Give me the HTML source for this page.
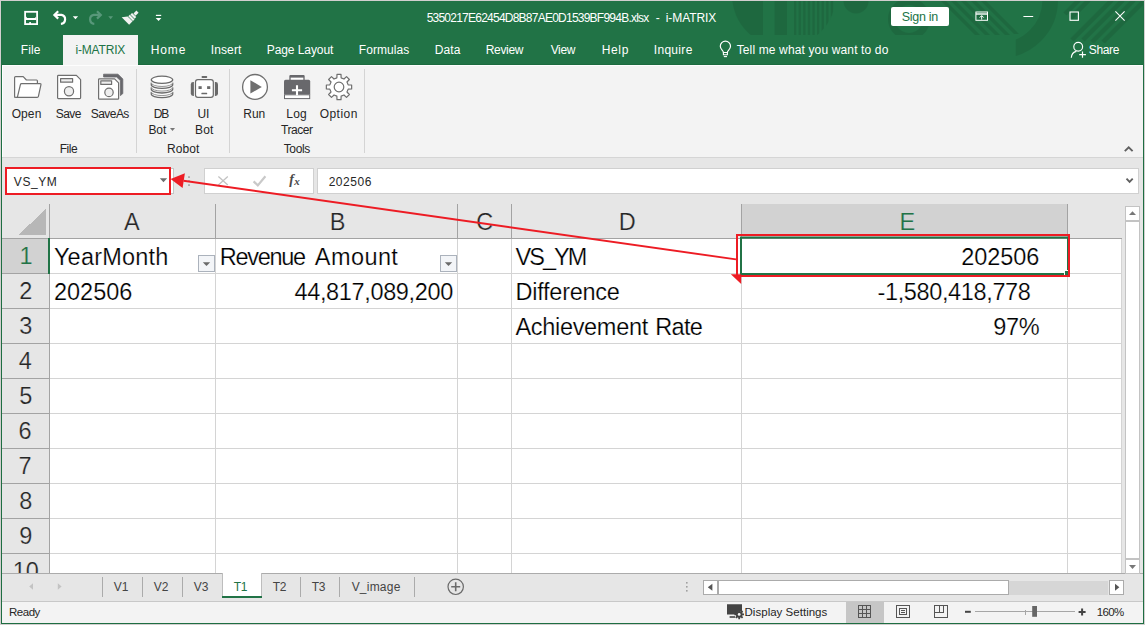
<!DOCTYPE html>
<html><head><meta charset="utf-8"><title>i-MATRIX</title>
<style>
html,body{margin:0;padding:0;background:#d2cfcf;}
body{width:1145px;height:625px;overflow:hidden;font-family:"Liberation Sans",sans-serif;}
#win{position:absolute;left:0;top:0;width:1145px;height:625px;overflow:hidden;background:#d2cfcf;}
.a{position:absolute;}
.t{position:absolute;white-space:pre;line-height:1;font-family:"Liberation Sans",sans-serif;}
svg{position:absolute;overflow:visible;}

</style></head>
<body>
<div id="win">
<!-- window frame -->
<div class="a" style="left:1px;top:1px;width:1143px;height:623px;background:#1e6e42;"></div>
<div class="a" style="left:2px;top:1px;width:1141px;height:63px;background:#217346;"></div>
<div class="a" style="left:2px;top:64px;width:1141px;height:1px;background:#1c6b3f;"></div>
<!-- ribbon body -->
<div class="a" style="left:2px;top:65px;width:1141px;height:92px;background:#f3f3f3;box-shadow:inset 1px 1px 0 #fdfdfd;"></div>
<!-- formula bar + grid surround -->
<div class="a" style="left:2px;top:157px;width:1141px;height:445px;background:#e6e6e6;"></div>
<div class="a" style="left:2px;top:157px;width:1141px;height:1px;background:#d5d5d5;"></div>
<!-- active ribbon tab -->
<div class="a" style="left:63px;top:35px;width:75px;height:30px;background:#f3f3f3;"></div>
<!-- sign in -->
<!-- ribbon group separators -->
<div class="a" style="left:136px;top:69px;width:1px;height:84px;background:#d4d4d4;"></div>
<div class="a" style="left:229px;top:69px;width:1px;height:84px;background:#d4d4d4;"></div>
<div class="a" style="left:364px;top:69px;width:1px;height:84px;background:#d4d4d4;"></div>
<!-- name box -->
<!-- original name box edge peeking right of red box -->
<div class="a" style="left:168px;top:168px;width:5px;height:24px;background:#fff;border:1px solid #c6c6c6;border-left:none;"></div>
<div class="a" style="left:5px;top:167px;width:162px;height:24px;background:#fff;border:2px solid #ed1c24;"></div>
<!-- fx box -->
<div class="a" style="left:204px;top:168px;width:108px;height:24px;background:#fff;border:1px solid #d0d0d0;"></div>
<!-- formula input -->
<div class="a" style="left:317px;top:168px;width:820px;height:24px;background:#fff;border:1px solid #d0d0d0;"></div>
<!-- grid white -->
<div class="a" style="left:50px;top:238px;width:1072px;height:335px;background:#fff;"></div>
<!-- E header highlight -->
<div class="a" style="left:742px;top:204px;width:326px;height:34px;background:#d2d2d2;"></div>
<!-- row 1 header highlight -->
<div class="a" style="left:2px;top:239px;width:47px;height:34px;background:#d2d2d2;"></div>
<!-- grid lines svg -->
<svg width="1145" height="625" style="left:0;top:0" shape-rendering="crispEdges">
  <g stroke="#d4d4d4" stroke-width="1">
    <!-- horizontal cell lines -->
    <path d="M49 273.5H1122M49 308.5H1122M49 343.5H1122M49 378.5H1122M49 413.5H1122M49 448.5H1122M49 483.5H1122M49 518.5H1122M49 553.5H1122"/>
    <!-- vertical cell lines -->
    <path d="M215.5 238V573M457.5 238V573M511.5 238V573M741.5 238V573M1067.5 238V573M1121.5 238V573"/>
  </g>
  <g stroke="#a3a3a3" stroke-width="1">
    <!-- header separators -->
    <path d="M49.5 204V573M2 238.5H1122"/>
    <path d="M215.5 204V238M457.5 204V238M511.5 204V238M741.5 204V238M1067.5 204V238"/>
    <path d="M2 273.5H49M2 308.5H49M2 343.5H49M2 378.5H49M2 413.5H49M2 448.5H49M2 483.5H49M2 518.5H49M2 553.5H49"/>
  </g>
  <path d="M19 234.6H46V208.6Z" fill="#b7b7b7" stroke="none"/>
  <path d="M49 238V273.5" stroke="#217346" stroke-width="2"/>
</svg>

<!-- ===== title bar icons ===== -->
<svg width="1145" height="66" style="left:0;top:0">
  <!-- decorative pattern -->
  <defs>
    <clipPath id="cpA"><rect x="700" y="1" width="443" height="34"/></clipPath>
    <clipPath id="cpB"><rect x="700" y="1" width="443" height="42"/></clipPath>
    <clipPath id="cpC"><rect x="1015.7" y="1" width="100" height="64"/></clipPath>
    <clipPath id="cpDisc"><circle cx="784" cy="-5" r="52"/></clipPath>
  </defs>
  <g clip-path="url(#cpA)" fill="#000" opacity="0.085">
    <g clip-path="url(#cpDisc)">
      <rect x="730" y="0" width="33" height="36"/>
      <rect x="774.6" y="0" width="12.4" height="36"/>
      <rect x="794" y="0" width="2.3" height="36"/><rect x="798.6" y="0" width="2.3" height="36"/><rect x="803.2" y="0" width="2.3" height="36"/>
      <rect x="807.8" y="0" width="2.3" height="36"/><rect x="812.4" y="0" width="2.3" height="36"/><rect x="817" y="0" width="2.3" height="36"/>
      <rect x="821.6" y="0" width="2.3" height="36"/><rect x="826.2" y="0" width="2.3" height="36"/><rect x="830.8" y="0" width="2.3" height="36"/>
    </g>
    <circle cx="856" cy="1" r="12.5"/>
    <path d="M909 -2a21 21 0 1 0 0.01 0ZM909 5a14 14 0 1 1 -0.01 0Z" fill-rule="evenodd"/>
    <!-- diagonal stripes \ -->
    <path d="M940 0h5l36 36h-5zM950 0h5l36 36h-5zM960 0h5l36 36h-5zM970 0h5l36 36h-5zM980 0h5l34 34h-5z"/>
  </g>
  <g clip-path="url(#cpC)" fill="none" stroke="#000" opacity="0.085">
    <path d="M1050.2 0A50.2 50.2 0 0 1 1000 50.2" stroke-width="15.6"/>
  </g>
  <g clip-path="url(#cpB)" fill="none" stroke="#000" opacity="0.085">
    <path d="M1079 0L1065 14M1089 0L1071 18" stroke-width="4.5"/>
    <path d="M1112 0L1072 40M1123 0L1083 40M1134 0L1092 42M1145 0L1103 42" stroke-width="4.5"/>
  </g>
  <rect x="891" y="7" width="58" height="19" rx="2" fill="#fff"/>
  <!-- save -->
  <rect x="25.1" y="11.8" width="12" height="12.3" fill="none" stroke="#fff" stroke-width="1.8"/>
  <path d="M26 18H36.2V20H26Z" fill="#fff"/>
  <path d="M26 16.6L27.2 18H26ZM36.2 16.6L35 18H36.2Z" fill="#fff"/>
  <rect x="29.2" y="22.1" width="1.8" height="2.2" fill="#fff"/>
  <!-- undo -->
  <g fill="none" stroke="#fff" stroke-width="2.2" stroke-linejoin="miter">
    <path d="M58.2 11.2L54.4 14.9L58.2 18.6"/>
    <path d="M55 14.9H61.5A4.5 4.5 0 0 1 60.9 23.8"/>
  </g>
  <path d="M72.8 16.2H78.1L75.45 19.2Z" fill="#fff"/>
  <!-- redo (disabled) -->
  <g fill="none" stroke="#58987a" stroke-width="2.2">
    <path d="M97 11.2L100.8 14.9L97 18.6"/>
    <path d="M100.2 14.9H93.7A4.5 4.5 0 0 0 94.3 23.8"/>
  </g>
  <path d="M108.3 16.2H113L110.65 19.2Z" fill="#58987a"/>
  <!-- brush -->
  <g fill="#f2f2f2" transform="matrix(-0.7071,0.7071,0.7071,0.7071,137.5,11.6)">
    <rect x="0" y="-1.5" width="4.2" height="3"/>
    <rect x="4.8" y="-2.9" width="2.3" height="5.9"/>
    <rect x="7.6" y="-3.2" width="2.3" height="6.6"/>
    <path d="M10.4 -3.6V3.4H15.2V-7.2Z"/>
  </g>
  <!-- customize QAT -->
  <path d="M155.9 15.4H161.2" stroke="#fff" stroke-width="1.2"/>
  <path d="M155.7 18H161.4L158.55 21.1Z" fill="#fff"/>
  <!-- ribbon display options -->
  <g fill="none" stroke="#fff" stroke-width="1">
    <rect x="975.9" y="12" width="11.6" height="8.3"/>
    <path d="M975.9 14H987.5" stroke-width="1.4"/>
    <path d="M981.7 19.6V15.8M979.7 17.6L981.7 15.6L983.7 17.6"/>
  </g>
  <!-- minimize, maximize, close -->
  <path d="M1023.4 16.5H1033.2" stroke="#fff" stroke-width="1"/>
  <rect x="1070" y="12" width="8.4" height="8.3" fill="none" stroke="#fff" stroke-width="1.1"/>
  <path d="M1115.4 11.4L1124.6 20.6M1124.6 11.4L1115.4 20.6" stroke="#fff" stroke-width="1.1" fill="none"/>
  <!-- lightbulb -->
  <g fill="none" stroke="#fff" stroke-width="1.2">
    <path d="M723.4 52.5C723.4 50.4 720.3 49.6 720.3 46.3A5.1 5.1 0 0 1 730.5 46.3C730.5 49.6 727.4 50.4 727.4 52.5Z"/>
    <path d="M723.4 52.5V54.7H727.4V52.5" stroke-width="1.1"/>
    <path d="M723.8 56.6H727" stroke-width="1.1"/>
  </g>
  <!-- share person -->
  <g fill="none" stroke="#fff" stroke-width="1.15">
    <circle cx="1078.2" cy="46.8" r="4.4"/>
    <path d="M1071.3 57.8C1071.5 54.4 1073.6 52 1076.4 51.4"/>
    <path d="M1082.5 51.6V57.8M1079.2 54.6H1085.9" stroke-width="1.2"/>
  </g>
</svg>

<!-- ===== ribbon icons ===== -->
<svg width="1145" height="160" style="left:0;top:0">
  <g fill="#fff" stroke="#6f6f6f" stroke-width="1.2" stroke-linejoin="round">
    <!-- Open folder -->
    <path d="M14.6 97.4V77.6Q14.6 76.6 15.6 76.6H23.2L26.4 80H36.6Q37.4 80 37.4 81V83.6"/>
    <path d="M14.6 96.6Q14.8 97.4 16 97.4H37.2Q38.2 97.4 38.4 96.4L40.9 84.8Q41.2 83.6 40 83.6H21.6Q20.6 83.6 20.4 84.6L17.4 97.2" />
    <!-- Save -->
    <path d="M57.6 76.2Q57.6 75.4 58.4 75.4H76.4L80.6 79.6V97.8Q80.6 98.6 79.8 98.6H58.4Q57.6 98.6 57.6 97.8Z"/>
    <rect x="60.6" y="78.6" width="12" height="3.6" fill="#efefef"/>
    <circle cx="69" cy="91.2" r="4.6" fill="#efefef"/>
  </g>
  <!-- SaveAs -->
  <path d="M103.6 74.2H118L122.8 79V93.6L120.4 95.6V80.6L116.6 77H103.6Z" fill="#68686c" stroke="#68686c" stroke-width="0.8" stroke-linejoin="round"/>
  <g fill="#fff" stroke="#6f6f6f" stroke-width="1.2" stroke-linejoin="round">
    <path d="M98.6 79.6Q98.6 78.8 99.4 78.8H114.6L118.6 82.8V98.4Q118.6 99.2 117.8 99.2H99.4Q98.6 99.2 98.6 98.4Z"/>
    <rect x="100.8" y="80.8" width="10.8" height="3.6" fill="#efefef"/>
    <circle cx="109" cy="92.4" r="4.2" fill="#efefef"/>
  </g>
  <!-- DB -->
  <g stroke-linejoin="round">
    <path d="M151.3 91.9V94.0A10.7 3.7 0 0 0 172.7 94.0V91.9" fill="#fafafa" stroke="#6a6a6a" stroke-width="1.3"/>
    <path d="M151.3 91.9A10.7 3.7 0 0 0 172.7 91.9" fill="#fafafa" stroke="#8a8a8a" stroke-width="0.9"/>
    <path d="M151.3 87.4V89.3A10.7 3.7 0 0 0 172.7 89.3V87.4" fill="#fafafa" stroke="#6a6a6a" stroke-width="1.3"/>
    <path d="M151.3 87.4A10.7 3.7 0 0 0 172.7 87.4" fill="#fafafa" stroke="#8a8a8a" stroke-width="0.9"/>
    <path d="M151.3 82.8V84.7A10.7 3.7 0 0 0 172.7 84.7V82.8" fill="#fafafa" stroke="#6a6a6a" stroke-width="1.3"/>
    <path d="M151.3 82.8A10.7 3.7 0 0 0 172.7 82.8" fill="#fafafa" stroke="#8a8a8a" stroke-width="0.9"/>
    <ellipse cx="162" cy="79.8" rx="10.7" ry="3.6" fill="#fff" stroke="#6a6a6a" stroke-width="1.3"/>
  </g>
  <path d="M170 128.1H175L172.5 130.9Z" fill="#777"/>
  <!-- UI bot -->
  <g>
    <rect x="201.6" y="76" width="5.6" height="1.9" rx="0.7" fill="#6a6a6a"/>
    <path d="M193.9 82V96H193.2Q190.8 96 190.8 93.6V84.4Q190.8 82 193.2 82Z" fill="#6a6a6a"/>
    <path d="M214.9 82V96H215.6Q218 96 218 93.6V84.4Q218 82 215.6 82Z" fill="#6a6a6a"/>
    <rect x="195.5" y="79.7" width="17.8" height="17.6" rx="2.4" fill="#fff" stroke="#6a6a6a" stroke-width="1.2"/>
    <rect x="198.5" y="86.2" width="3.2" height="2.8" fill="#6a6a6a"/>
    <rect x="207.1" y="86.2" width="3.2" height="2.8" fill="#6a6a6a"/>
    <rect x="201.4" y="92.8" width="5.8" height="1.4" rx="0.5" fill="#6a6a6a"/>
  </g>
  <!-- Run -->
  <circle cx="255" cy="86.9" r="12.4" fill="#fff" stroke="#6f6f6f" stroke-width="1.3"/>
  <path d="M250.4 80.2L261.8 86.9L250.4 93.6Z" fill="#6f6f6f"/>
  <!-- Log tracer -->
  <g>
    <path d="M290 80V77Q290 76.8 290.2 76.8H303.8Q304 76.8 304 77V80" fill="#fff" stroke="#68686c" stroke-width="1.3"/>
    <rect x="289.4" y="75" width="15.2" height="2.2" rx="0.9" fill="#68686c"/>
    <path d="M284 81.4Q284 79.8 285.6 79.8H308.6Q310.2 79.8 310.2 81.4V94.6H284Z" fill="#68686c"/>
    <rect x="284.5" y="94.8" width="25.2" height="3.8" fill="#fff" stroke="#68686c" stroke-width="1"/>
    <path d="M297 85.2V95.2M291.9 90.2H302.1" stroke="#fff" stroke-width="2.1"/>
  </g>
  <!-- Option gear -->
  <g fill="#fff" stroke="#6f6f6f" stroke-width="1.2" stroke-linejoin="round">
    <path d="M336.88 77.84L337.00 74.36L341.00 74.36L341.12 77.84L343.97 79.02L346.52 76.64L349.36 79.48L346.98 82.03L348.16 84.88L351.64 85.00L351.64 89.00L348.16 89.12L346.98 91.97L349.36 94.52L346.52 97.36L343.97 94.98L341.12 96.16L341.00 99.64L337.00 99.64L336.88 96.16L334.03 94.98L331.48 97.36L328.64 94.52L331.02 91.97L329.84 89.12L326.36 89.00L326.36 85.00L329.84 84.88L331.02 82.03L328.64 79.48L331.48 76.64L334.03 79.02Z"/>
    <circle cx="339" cy="87" r="4.8"/>
  </g>
  <!-- collapse ribbon caret -->
  <path d="M1124.8 151.2L1128.7 147.3L1132.6 151.2" fill="none" stroke="#606060" stroke-width="1.9"/>
</svg>

<!-- grid text -->
<span class="t" style="left:124.09px;top:211.11px;font-size:23.5px;color:#262626;letter-spacing:0.000px;-webkit-text-stroke:0.22px #e6e6e6;">A</span>
<span class="t" style="left:329.66px;top:211.11px;font-size:23.5px;color:#262626;letter-spacing:0.000px;-webkit-text-stroke:0.22px #e6e6e6;">B</span>
<span class="t" style="left:476.19px;top:211.11px;font-size:23.5px;color:#262626;letter-spacing:0.000px;-webkit-text-stroke:0.22px #e6e6e6;">C</span>
<span class="t" style="left:618.82px;top:211.11px;font-size:23.5px;color:#262626;letter-spacing:0.000px;-webkit-text-stroke:0.22px #e6e6e6;">D</span>
<span class="t" style="left:899.39px;top:211.11px;font-size:23.5px;color:#217346;letter-spacing:0.000px;-webkit-text-stroke:0.22px #d2d2d2;">E</span>
<span class="t" style="left:19.61px;top:245.31px;font-size:23.5px;color:#217346;letter-spacing:0.000px;-webkit-text-stroke:0.22px #d2d2d2;">1</span>
<span class="t" style="left:19.30px;top:280.31px;font-size:23.5px;color:#262626;letter-spacing:0.000px;-webkit-text-stroke:0.22px #e6e6e6;">2</span>
<span class="t" style="left:19.30px;top:315.31px;font-size:23.5px;color:#262626;letter-spacing:0.000px;-webkit-text-stroke:0.22px #e6e6e6;">3</span>
<span class="t" style="left:18.72px;top:350.31px;font-size:23.5px;color:#262626;letter-spacing:0.000px;-webkit-text-stroke:0.22px #e6e6e6;">4</span>
<span class="t" style="left:19.30px;top:385.31px;font-size:23.5px;color:#262626;letter-spacing:0.000px;-webkit-text-stroke:0.22px #e6e6e6;">5</span>
<span class="t" style="left:18.40px;top:420.31px;font-size:23.5px;color:#262626;letter-spacing:0.000px;-webkit-text-stroke:0.22px #e6e6e6;">6</span>
<span class="t" style="left:18.40px;top:455.31px;font-size:23.5px;color:#262626;letter-spacing:0.000px;-webkit-text-stroke:0.22px #e6e6e6;">7</span>
<span class="t" style="left:19.30px;top:490.31px;font-size:23.5px;color:#262626;letter-spacing:0.000px;-webkit-text-stroke:0.22px #e6e6e6;">8</span>
<span class="t" style="left:19.30px;top:525.31px;font-size:23.5px;color:#262626;letter-spacing:0.000px;-webkit-text-stroke:0.22px #e6e6e6;">9</span>
<span class="t" style="left:12.66px;top:560.31px;font-size:23.5px;color:#262626;letter-spacing:-0.091px;-webkit-text-stroke:0.22px #e6e6e6;">10</span>
<span class="t" style="left:53.88px;top:246.01px;font-size:23.5px;color:#000;letter-spacing:0.215px;-webkit-text-stroke:0.22px #fff;">YearMonth</span>
<span class="t" style="left:219.81px;top:246.01px;font-size:23.5px;color:#000;letter-spacing:-1.295px;-webkit-text-stroke:0.22px #fff;">Revenue</span>
<span class="t" style="left:314.87px;top:246.01px;font-size:23.5px;color:#000;letter-spacing:0.408px;-webkit-text-stroke:0.22px #fff;">Amount</span>
<span class="t" style="left:515.50px;top:246.01px;font-size:23.5px;color:#000;letter-spacing:-1.945px;-webkit-text-stroke:0.22px #fff;">VS_YM</span>
<span class="t" style="left:961.14px;top:246.01px;font-size:23.5px;color:#000;letter-spacing:-0.054px;-webkit-text-stroke:0.22px #fff;">202506</span>
<span class="t" style="left:53.92px;top:281.01px;font-size:23.5px;color:#000;letter-spacing:0.020px;-webkit-text-stroke:0.22px #fff;">202506</span>
<span class="t" style="left:294.50px;top:281.01px;font-size:23.5px;color:#000;letter-spacing:-0.356px;-webkit-text-stroke:0.22px #fff;">44,817,089,200</span>
<span class="t" style="left:515.60px;top:281.01px;font-size:23.5px;color:#000;letter-spacing:-0.264px;-webkit-text-stroke:0.22px #fff;">Difference</span>
<span class="t" style="left:877.50px;top:281.01px;font-size:23.5px;color:#000;letter-spacing:-0.365px;-webkit-text-stroke:0.22px #fff;">-1,580,418,778</span>
<span class="t" style="left:515.50px;top:316.01px;font-size:23.5px;color:#000;letter-spacing:-0.319px;-webkit-text-stroke:0.22px #fff;">Achievement</span>
<span class="t" style="left:655.24px;top:316.01px;font-size:23.5px;color:#000;letter-spacing:-0.654px;-webkit-text-stroke:0.22px #fff;">Rate</span>
<span class="t" style="left:993.34px;top:316.01px;font-size:23.5px;color:#000;letter-spacing:-0.368px;-webkit-text-stroke:0.22px #fff;">97%</span>
<!-- sheet tab bar -->
<div class="a" style="left:2px;top:573px;width:1141px;height:28px;background:#e6e6e6;"></div>
<div class="a" style="left:2px;top:573px;width:1141px;height:1px;background:#ababab;"></div>
<div class="a" style="left:222px;top:573px;width:38px;height:23px;background:#fff;border-left:1px solid #bdbdbd;border-right:1px solid #bdbdbd;"></div>
<div class="a" style="left:222px;top:596px;width:40px;height:2px;background:#217346;"></div>
<!-- status bar -->
<div class="a" style="left:2px;top:601px;width:1141px;height:1px;background:#c8c8c8;"></div>
<div class="a" style="left:2px;top:602px;width:1141px;height:21px;background:#f3f3f3;"></div>
<svg width="1145" height="625" style="left:0;top:0">
  <!-- vertical scrollbar -->
  <rect x="1125.5" y="206.5" width="14" height="14" fill="#fff" stroke="#c3c3c3"/>
  <path d="M1129 215H1136L1132.5 211.2Z" fill="#777"/>
  <rect x="1125.5" y="221.5" width="14" height="337" fill="#fff" stroke="#c3c3c3"/>
  <rect x="1125.5" y="559.5" width="14" height="14" fill="#fff" stroke="#c3c3c3"/>
  <path d="M1129 565H1136L1132.5 569Z" fill="#777"/>
  <!-- horizontal scrollbar -->
  <rect x="718" y="581" width="390" height="14" fill="#d6d6d6"/>
  <rect x="703.5" y="580.5" width="14" height="14" fill="#fff" stroke="#ababab"/>
  <path d="M712.4 583.8V590.8L707.8 587.3Z" fill="#555"/>
  <rect x="718.5" y="580.5" width="290" height="14" fill="#fff" stroke="#ababab"/>
  <rect x="1109.5" y="580.5" width="14" height="14" fill="#fff" stroke="#ababab"/>
  <path d="M1115 583.8V590.8L1119.4 587.3Z" fill="#555"/>
  <g fill="#a0a0a0"><rect x="686" y="582" width="1.6" height="1.6"/><rect x="686" y="586" width="1.6" height="1.6"/><rect x="686" y="590" width="1.6" height="1.6"/></g>
  <!-- sheet nav arrows -->
  <path d="M33 583.2V589.8L29.2 586.5Z" fill="#c3c3c3"/>
  <path d="M57.8 583.2V589.8L61.6 586.5Z" fill="#c3c3c3"/>
  <!-- tab separators -->
  <g stroke="#ababab" stroke-width="1" shape-rendering="crispEdges">
    <path d="M102.5 577V597M142.5 577V597M182.5 577V597M300.5 577V597M339.5 577V597M414.5 577V597"/>
  </g>
  <!-- new sheet -->
  <circle cx="455.7" cy="586.8" r="7.7" fill="none" stroke="#6a6a6a" stroke-width="1.2"/>
  <path d="M451.2 586.8H460.2M455.7 582.3V591.3" stroke="#6a6a6a" stroke-width="1.6"/>
  <!-- status bar: display settings icon -->
  <path d="M727 604.2H742V611H738.5L736.5 614.4H727Z" fill="#444"/>
  <path d="M729.6 617H735" stroke="#444" stroke-width="1.6"/>
  <g transform="translate(739.2,614.4)">
    <circle r="3.3" fill="#444"/>
    <g stroke="#444" stroke-width="1.8"><path d="M0 -4.8V4.8M-4.8 0H4.8M-3.4 -3.4L3.4 3.4M-3.4 3.4L3.4 -3.4"/></g>
    <circle r="1.4" fill="#f3f3f3"/>
  </g>
  <!-- view buttons -->
  <rect x="846" y="602" width="38" height="21" fill="#c6c6c6"/>
  <g fill="none" stroke="#555" stroke-width="1" shape-rendering="crispEdges">
    <rect x="858.5" y="605.5" width="12" height="12"/>
    <path d="M862.5 605.5V617.5M866.5 605.5V617.5M858.5 609.5H870.5M858.5 613.5H870.5"/>
    <rect x="896.5" y="605.5" width="13" height="12"/>
    <rect x="899.5" y="608.5" width="7" height="6"/>
    <path d="M901 610.5H905M901 612.5H905" stroke-width="1"/>
    <rect x="934.5" y="605.5" width="13" height="12"/>
    <path d="M939.5 605.5V612.5M943.5 605.5V612.5M934.5 612.5H943.5"/>
  </g>
  <!-- zoom slider -->
  <path d="M965 611.8H970.8" stroke="#444" stroke-width="2"/>
  <path d="M975 611.5H1075" stroke="#a6a6a6" stroke-width="1" shape-rendering="crispEdges"/>
  <path d="M1025.5 610V615" stroke="#a6a6a6" stroke-width="1" shape-rendering="crispEdges"/>
  <rect x="1032.2" y="606" width="4.8" height="10.8" fill="#666"/>
  <path d="M1078.6 612.1H1085.6M1082.1 608.6V615.6" stroke="#444" stroke-width="2"/>
</svg>

<!-- ui text -->
<span class="t" style="left:426.64px;top:12.04px;font-size:12px;color:#fff;letter-spacing:-0.763px;">5350217E62454D8B87AE0D1539BF994B.xlsx</span>
<span class="t" style="left:655.64px;top:12.04px;font-size:12px;color:#fff;letter-spacing:0.000px;">-</span>
<span class="t" style="left:665.69px;top:12.04px;font-size:12px;color:#fff;letter-spacing:-0.063px;">i-MATRIX</span>
<span class="t" style="left:901.83px;top:11.32px;font-size:12.5px;color:#217346;letter-spacing:-0.326px;">Sign in</span>
<span class="t" style="left:20.74px;top:43.94px;font-size:12px;color:#fff;letter-spacing:0.092px;">File</span>
<span class="t" style="left:150.74px;top:43.94px;font-size:12px;color:#fff;letter-spacing:0.868px;">Home</span>
<span class="t" style="left:210.74px;top:43.94px;font-size:12px;color:#fff;letter-spacing:0.121px;">Insert</span>
<span class="t" style="left:266.74px;top:43.94px;font-size:12px;color:#fff;letter-spacing:-0.077px;">Page Layout</span>
<span class="t" style="left:358.74px;top:43.94px;font-size:12px;color:#fff;letter-spacing:0.086px;">Formulas</span>
<span class="t" style="left:434.74px;top:43.94px;font-size:12px;color:#fff;letter-spacing:0.087px;">Data</span>
<span class="t" style="left:485.74px;top:43.94px;font-size:12px;color:#fff;letter-spacing:-0.328px;">Review</span>
<span class="t" style="left:550.64px;top:43.94px;font-size:12px;color:#fff;letter-spacing:-0.326px;">View</span>
<span class="t" style="left:601.74px;top:43.94px;font-size:12px;color:#fff;letter-spacing:0.644px;">Help</span>
<span class="t" style="left:653.74px;top:43.94px;font-size:12px;color:#fff;letter-spacing:0.319px;">Inquire</span>
<span class="t" style="left:736.64px;top:43.94px;font-size:12px;color:#fff;letter-spacing:0.140px;">Tell me what you want to do</span>
<span class="t" style="left:1088.74px;top:43.94px;font-size:12px;color:#fff;letter-spacing:-0.353px;">Share</span>
<span class="t" style="left:75.43px;top:43.94px;font-size:12px;color:#217346;letter-spacing:-0.168px;">i-MATRIX</span>
<span class="t" style="left:11.64px;top:107.94px;font-size:12px;color:#262626;letter-spacing:0.120px;">Open</span>
<span class="t" style="left:55.74px;top:107.94px;font-size:12px;color:#262626;letter-spacing:-0.580px;">Save</span>
<span class="t" style="left:90.74px;top:107.94px;font-size:12px;color:#262626;letter-spacing:-0.548px;">SaveAs</span>
<span class="t" style="left:153.69px;top:107.94px;font-size:12px;color:#262626;letter-spacing:-1.052px;">DB</span>
<span class="t" style="left:148.53px;top:123.84px;font-size:12px;color:#262626;letter-spacing:-0.148px;">Bot</span>
<span class="t" style="left:197.53px;top:107.94px;font-size:12px;color:#262626;letter-spacing:-0.220px;">UI</span>
<span class="t" style="left:195.06px;top:123.84px;font-size:12px;color:#262626;letter-spacing:0.142px;">Bot</span>
<span class="t" style="left:243.32px;top:107.94px;font-size:12px;color:#262626;letter-spacing:-0.093px;">Run</span>
<span class="t" style="left:286.32px;top:107.94px;font-size:12px;color:#262626;letter-spacing:0.214px;">Log</span>
<span class="t" style="left:281.01px;top:123.84px;font-size:12px;color:#262626;letter-spacing:-0.451px;">Tracer</span>
<span class="t" style="left:319.64px;top:107.94px;font-size:12px;color:#262626;letter-spacing:0.472px;">Option</span>
<span class="t" style="left:59.69px;top:142.94px;font-size:12px;color:#262626;letter-spacing:-0.418px;">File</span>
<span class="t" style="left:167.06px;top:142.94px;font-size:12px;color:#262626;letter-spacing:0.067px;">Robot</span>
<span class="t" style="left:283.64px;top:142.94px;font-size:12px;color:#262626;letter-spacing:-0.324px;">Tools</span>
<span class="t" style="left:13.85px;top:175.54px;font-size:12px;color:#262626;letter-spacing:0.536px;">VS_YM</span>
<span class="t" style="left:328.64px;top:175.54px;font-size:12px;color:#262626;letter-spacing:0.567px;">202506</span>
<span class="t" style="left:113.64px;top:581.44px;font-size:12px;color:#444;letter-spacing:0.032px;">V1</span>
<span class="t" style="left:153.64px;top:581.44px;font-size:12px;color:#444;letter-spacing:0.032px;">V2</span>
<span class="t" style="left:193.64px;top:581.44px;font-size:12px;color:#444;letter-spacing:0.032px;">V3</span>
<span class="t" style="left:233.64px;top:581.44px;font-size:12px;color:#217346;letter-spacing:-0.296px;">T1</span>
<span class="t" style="left:272.64px;top:581.44px;font-size:12px;color:#444;letter-spacing:-0.296px;">T2</span>
<span class="t" style="left:311.64px;top:581.44px;font-size:12px;color:#444;letter-spacing:-0.296px;">T3</span>
<span class="t" style="left:351.64px;top:581.44px;font-size:12px;color:#444;letter-spacing:0.224px;">V_image</span>
<span class="t" style="left:9.07px;top:606.57px;font-size:11.5px;color:#262626;letter-spacing:-0.495px;">Ready</span>
<span class="t" style="left:744.55px;top:606.57px;font-size:11.5px;color:#262626;letter-spacing:0.019px;">Display Settings</span>
<span class="t" style="left:1096.75px;top:606.57px;font-size:11.5px;color:#262626;letter-spacing:-0.627px;">160%</span>
<svg width="1145" height="625" style="left:0;top:0">
  <!-- name box dropdown -->
  <path d="M159.8 178.2H167.2L163.5 182.2Z" fill="#6d6d6d"/>
  <!-- formula bar grip dots -->
  <g fill="#9a9a9a"><rect x="188.2" y="176.3" width="1.6" height="1.6"/><rect x="188.2" y="180.3" width="1.6" height="1.6"/><rect x="188.2" y="184.3" width="1.6" height="1.6"/></g>
  <!-- cancel / enter / fx -->
  <path d="M218.4 176.6L227.8 185M227.8 176.6L218.4 185" stroke="#c2c2c2" stroke-width="1.3" fill="none"/>
  <path d="M253.6 181.4L257.8 185.4L265.4 176.2" stroke="#c9c9c9" stroke-width="2.2" fill="none"/>
  <!-- formula expand chevron -->
  <path d="M1126.5 178.7L1129.6 181.8L1132.7 178.7" stroke="#606060" stroke-width="1.9" fill="none"/>
  <!-- filter buttons -->
  <g>
    <rect x="198.5" y="255.5" width="16" height="16" fill="#f3f5f8" stroke="#abb2bc"/>
    <path d="M202.8 262.2H210.2L206.5 266Z" fill="#6a6a6a"/>
    <rect x="440.5" y="255.5" width="16" height="16" fill="#f3f5f8" stroke="#abb2bc"/>
    <path d="M444.8 262.2H452.2L448.5 266Z" fill="#6a6a6a"/>
  </g>
  <!-- selection (green) on E1 -->
  <rect x="741" y="237.6" width="327" height="36.4" fill="none" stroke="#217346" stroke-width="2"/>
  <rect x="1064.5" y="270.5" width="5" height="5" fill="#217346" stroke="#fff" stroke-width="1"/>
  <!-- red annotation rectangle -->
  <rect x="737" y="235" width="332" height="41" fill="none" stroke="#ed1c24" stroke-width="2"/>
  <!-- red triangle -->
  <path d="M730.8 274.2H741.2V284Z" fill="#ed1c24"/>
  <!-- arrow -->
  <path d="M736 259.4L183.5 180.7" stroke="#ed1c24" stroke-width="1.9" fill="none"/>
  <path d="M170.6 178.9L184.9 173.3L182.6 187.9Z" fill="#ed1c24"/>
</svg>
<div class="t" style="left:289.3px;top:173.2px;font-family:'Liberation Serif',serif;font-style:italic;font-weight:bold;font-size:14px;color:#4a4a4a;letter-spacing:0.2px;">f<span style="font-size:11px;position:relative;top:0.4px;">x</span></div>

</div>
</body></html>
